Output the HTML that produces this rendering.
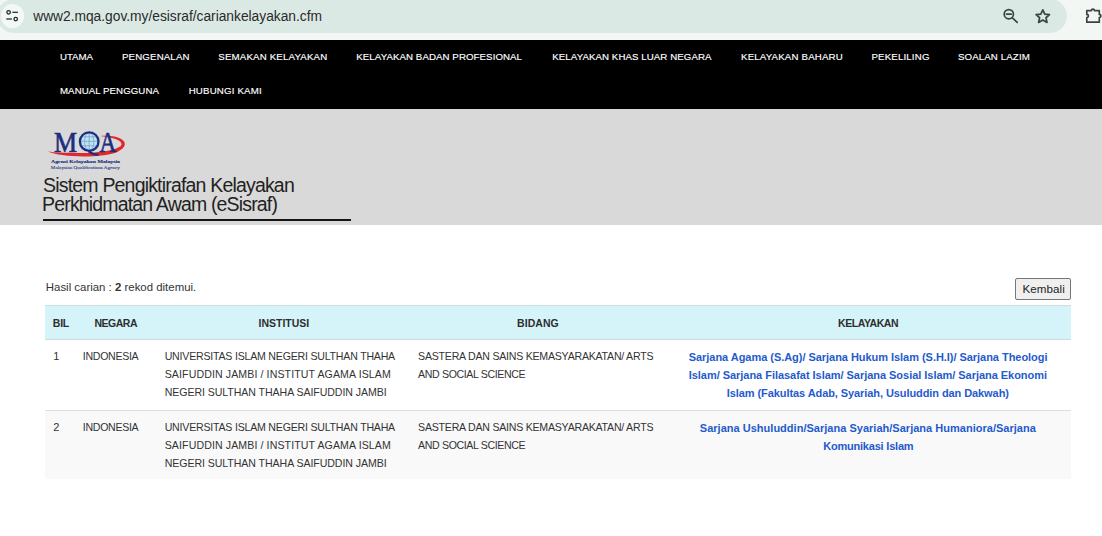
<!DOCTYPE html>
<html><head><meta charset="utf-8"><style>
html,body{margin:0;padding:0;width:1102px;height:536px;overflow:hidden;background:#fff;position:relative;font-family:"Liberation Sans",sans-serif}
.t{position:absolute;white-space:nowrap}
b{font-weight:bold}
</style></head><body>
<div style="position:absolute;left:0;top:0;width:1102px;height:40px;background:#f2f7f4"></div>
<div style="position:absolute;left:-3px;top:-1px;width:1070px;height:34px;border-radius:17px;background:#dbe9e4"></div>
<div style="position:absolute;left:1px;top:4px;width:23px;height:24px;border-radius:12px;background:#f3f8f6"></div>
<svg style="position:absolute;left:0;top:0" width="40" height="36" viewBox="0 0 40 36">
<g fill="none" stroke="#1f2a26" stroke-width="1.25">
<circle cx="8.6" cy="12.3" r="1.75"/><line x1="12.3" y1="12.3" x2="17.9" y2="12.3"/>
<circle cx="15.7" cy="19" r="1.75"/><line x1="6.3" y1="19" x2="11.9" y2="19"/>
</g></svg>
<svg style="position:absolute;left:995px;top:0;overflow:visible" width="107" height="36" viewBox="995 0 107 36">
<g fill="none" stroke="#3a4541" stroke-width="1.7" stroke-linecap="round" stroke-linejoin="round">
<circle cx="1008.8" cy="14.2" r="4.6"/><line x1="1006.5" y1="14.2" x2="1011.1" y2="14.2"/>
<line x1="1012.4" y1="17.8" x2="1017.2" y2="22.4"/>
<path d="M1042.80 9.82 L1044.78 14.22 L1049.51 14.66 L1045.99 17.74 L1046.98 22.47 L1042.80 20.05 L1038.62 22.47 L1039.61 17.74 L1036.09 14.66 L1040.82 14.22 Z"/>
<path d="M1086.8 10.6 H1091.4 A1.5 1.5 0 0 1 1094.4 10.6 H1099.3 V14.4 A1.6 1.6 0 0 1 1099.3 17.6 V22.2 H1086.8 V17.6 A1.6 1.6 0 0 0 1086.8 14.4 Z"/>
</g></svg>
<div style="position:absolute;left:0;top:40px;width:1102px;height:68.5px;background:#000"></div>
<div style="position:absolute;left:0;top:108.5px;width:1102px;height:116.5px;background:#d9d9d9"></div>
<svg style="position:absolute;left:40px;top:122px" width="95" height="52" viewBox="40 122 95 52">
<path d="M47.8 151.6 C60 157.4 100 158.4 116 152.4 C128.5 147.5 128 139 113 136.3 C108 135.6 103 135.6 100.5 136.1 C108 137 121.5 139.2 121.5 144.2 C121 149.5 100 153 80 153 C65 153 54 152.6 47.8 151.6 Z" fill="#e3262e"/>
<circle cx="89.2" cy="141.6" r="9" fill="#bde2f2"/>
<g stroke="#6b97c4" stroke-width="0.65" fill="none">
<line x1="80" y1="136.8" x2="98.5" y2="136.8"/><line x1="80" y1="141.3" x2="98.5" y2="141.3"/><line x1="80" y1="145.8" x2="98.5" y2="145.8"/>
<ellipse cx="89.2" cy="141.6" rx="4.6" ry="9"/><line x1="89.2" y1="132.3" x2="89.2" y2="150.3"/>
</g>
<circle cx="89.2" cy="141.6" r="9.3" fill="none" stroke="#1c2f7e" stroke-width="2.3"/>
<path d="M88.5 151.1 C91.5 153.6 94.5 154.8 98.5 154.6" stroke="#1c2f7e" stroke-width="2.1" fill="none"/>
<text transform="translate(54,152.3) scale(0.85,1)" font-family="Liberation Serif" font-size="30.5" fill="#1c2f7e" stroke="#1c2f7e" stroke-width="0.7">M</text>
<text transform="translate(99.6,152.3) scale(0.76,1)" font-family="Liberation Serif" font-size="30.5" fill="#1c2f7e" stroke="#1c2f7e" stroke-width="0.7">A</text>
<text x="51" y="163.3" font-family="Liberation Serif" font-weight="bold" font-size="5" fill="#22337f" stroke="#22337f" stroke-width="0.15" textLength="69" lengthAdjust="spacingAndGlyphs">Agensi Kelayakan Malaysia</text>
<text x="50.8" y="168.9" font-family="Liberation Serif" font-size="4.3" fill="#2e3f8c" stroke="#2e3f8c" stroke-width="0.1" textLength="69" lengthAdjust="spacingAndGlyphs">Malaysian Qualifications Agency</text>
</svg>
<div style="position:absolute;left:43px;top:218.6px;width:308px;height:2.2px;background:#151515"></div>
<div style="position:absolute;left:1015px;top:278px;width:54px;height:20px;border:1px solid #767676;border-radius:2px;background:#efefef"></div>
<div style="position:absolute;left:45px;top:305px;width:1026px;height:1px;background:#d3dcdf"></div>
<div style="position:absolute;left:45px;top:306px;width:1026px;height:33px;background:#d4f4f9"></div>
<div style="position:absolute;left:45px;top:339px;width:1026px;height:1px;background:#cfd8db"></div>
<div style="position:absolute;left:45px;top:410px;width:1026px;height:1px;background:#dedede"></div>
<div style="position:absolute;left:45px;top:411px;width:1026px;height:67.5px;background:#f9f9f9"></div>
<div class="t" style="left:33.20px;top:6.86px;font-size:13.8px;line-height:19.32px;color:#2a2a2a;font-weight:normal;letter-spacing:-0.019px;">www2.mqa.gov.my/esisraf/cariankelayakan.cfm</div>
<div class="t" style="left:59.90px;top:49.85px;font-size:9.7px;line-height:13.58px;color:#fff;font-weight:normal;letter-spacing:-0.006px;-webkit-text-stroke:0.15px #fff">UTAMA</div>
<div class="t" style="left:122.00px;top:49.85px;font-size:9.7px;line-height:13.58px;color:#fff;font-weight:normal;letter-spacing:0.142px;-webkit-text-stroke:0.15px #fff">PENGENALAN</div>
<div class="t" style="left:218.30px;top:49.85px;font-size:9.7px;line-height:13.58px;color:#fff;font-weight:normal;letter-spacing:0.166px;-webkit-text-stroke:0.15px #fff">SEMAKAN KELAYAKAN</div>
<div class="t" style="left:356.30px;top:49.85px;font-size:9.7px;line-height:13.58px;color:#fff;font-weight:normal;letter-spacing:0.071px;-webkit-text-stroke:0.15px #fff">KELAYAKAN BADAN PROFESIONAL</div>
<div class="t" style="left:552.30px;top:49.85px;font-size:9.7px;line-height:13.58px;color:#fff;font-weight:normal;letter-spacing:0.071px;-webkit-text-stroke:0.15px #fff">KELAYAKAN KHAS LUAR NEGARA</div>
<div class="t" style="left:741.00px;top:49.85px;font-size:9.7px;line-height:13.58px;color:#fff;font-weight:normal;letter-spacing:0.164px;-webkit-text-stroke:0.15px #fff">KELAYAKAN BAHARU</div>
<div class="t" style="left:871.40px;top:49.85px;font-size:9.7px;line-height:13.58px;color:#fff;font-weight:normal;letter-spacing:0.167px;-webkit-text-stroke:0.15px #fff">PEKELILING</div>
<div class="t" style="left:958.00px;top:49.85px;font-size:9.7px;line-height:13.58px;color:#fff;font-weight:normal;letter-spacing:0.113px;-webkit-text-stroke:0.15px #fff">SOALAN LAZIM</div>
<div class="t" style="left:60.00px;top:83.85px;font-size:9.7px;line-height:13.58px;color:#fff;font-weight:normal;letter-spacing:0.054px;-webkit-text-stroke:0.15px #fff">MANUAL PENGGUNA</div>
<div class="t" style="left:188.70px;top:83.85px;font-size:9.7px;line-height:13.58px;color:#fff;font-weight:normal;letter-spacing:0.177px;-webkit-text-stroke:0.15px #fff">HUBUNGI KAMI</div>
<div class="t" style="left:43.10px;top:171.99px;font-size:19.5px;line-height:27.3px;color:#222;font-weight:normal;letter-spacing:-0.816px;">Sistem Pengiktirafan Kelayakan</div>
<div class="t" style="left:42.10px;top:191.09px;font-size:19.5px;line-height:27.3px;color:#222;font-weight:normal;letter-spacing:-0.837px;">Perkhidmatan Awam (eSisraf)</div>
<div class="t" style="left:45.80px;top:279.67px;font-size:11.4px;line-height:15.96px;color:#333;font-weight:normal;letter-spacing:0.011px;">Hasil carian : <b>2</b> rekod ditemui.</div>
<div class="t" style="left:1022.40px;top:281.06px;font-size:11.6px;line-height:16.24px;color:#222;font-weight:normal;letter-spacing:0.098px;">Kembali</div>
<div class="t" style="left:52.80px;top:316.21px;font-size:10.5px;line-height:14.7px;color:#2e2e2e;font-weight:bold;letter-spacing:-0.250px;">BIL</div>
<div class="t" style="left:94.40px;top:316.21px;font-size:10.5px;line-height:14.7px;color:#2e2e2e;font-weight:bold;letter-spacing:-0.464px;">NEGARA</div>
<div class="t" style="left:258.60px;top:316.21px;font-size:10.5px;line-height:14.7px;color:#2e2e2e;font-weight:bold;letter-spacing:-0.017px;">INSTITUSI</div>
<div class="t" style="left:517.00px;top:316.21px;font-size:10.5px;line-height:14.7px;color:#2e2e2e;font-weight:bold;letter-spacing:0.070px;">BIDANG</div>
<div class="t" style="left:838.10px;top:316.21px;font-size:10.5px;line-height:14.7px;color:#2e2e2e;font-weight:bold;letter-spacing:-0.438px;">KELAYAKAN</div>
<div class="t" style="left:53.20px;top:349.29px;font-size:11px;line-height:15.4px;color:#333;font-weight:normal;letter-spacing:0.000px;">1</div>
<div class="t" style="left:82.80px;top:349.11px;font-size:10.6px;line-height:14.84px;color:#333;font-weight:normal;letter-spacing:-0.301px;">INDONESIA</div>
<div class="t" style="left:164.70px;top:349.11px;font-size:10.6px;line-height:14.84px;color:#333;font-weight:normal;letter-spacing:-0.214px;">UNIVERSITAS ISLAM NEGERI SULTHAN THAHA</div>
<div class="t" style="left:164.70px;top:367.11px;font-size:10.6px;line-height:14.84px;color:#333;font-weight:normal;letter-spacing:0.104px;">SAIFUDDIN JAMBI / INSTITUT AGAMA ISLAM</div>
<div class="t" style="left:164.70px;top:385.11px;font-size:10.6px;line-height:14.84px;color:#333;font-weight:normal;letter-spacing:-0.071px;">NEGERI SULTHAN THAHA SAIFUDDIN JAMBI</div>
<div class="t" style="left:418.10px;top:349.11px;font-size:10.6px;line-height:14.84px;color:#333;font-weight:normal;letter-spacing:-0.236px;">SASTERA DAN SAINS KEMASYARAKATAN/ ARTS</div>
<div class="t" style="left:418.10px;top:367.11px;font-size:10.6px;line-height:14.84px;color:#333;font-weight:normal;letter-spacing:-0.367px;">AND SOCIAL SCIENCE</div>
<div class="t" style="left:53.20px;top:420.49px;font-size:11px;line-height:15.4px;color:#333;font-weight:normal;letter-spacing:0.000px;">2</div>
<div class="t" style="left:82.80px;top:420.31px;font-size:10.6px;line-height:14.84px;color:#333;font-weight:normal;letter-spacing:-0.301px;">INDONESIA</div>
<div class="t" style="left:164.70px;top:420.31px;font-size:10.6px;line-height:14.84px;color:#333;font-weight:normal;letter-spacing:-0.214px;">UNIVERSITAS ISLAM NEGERI SULTHAN THAHA</div>
<div class="t" style="left:164.70px;top:438.31px;font-size:10.6px;line-height:14.84px;color:#333;font-weight:normal;letter-spacing:0.104px;">SAIFUDDIN JAMBI / INSTITUT AGAMA ISLAM</div>
<div class="t" style="left:164.70px;top:456.31px;font-size:10.6px;line-height:14.84px;color:#333;font-weight:normal;letter-spacing:-0.071px;">NEGERI SULTHAN THAHA SAIFUDDIN JAMBI</div>
<div class="t" style="left:418.10px;top:420.31px;font-size:10.6px;line-height:14.84px;color:#333;font-weight:normal;letter-spacing:-0.236px;">SASTERA DAN SAINS KEMASYARAKATAN/ ARTS</div>
<div class="t" style="left:418.10px;top:438.31px;font-size:10.6px;line-height:14.84px;color:#333;font-weight:normal;letter-spacing:-0.367px;">AND SOCIAL SCIENCE</div>
<div class="t" style="left:688.70px;top:349.79px;font-size:11px;line-height:15.4px;color:#1f5bcd;font-weight:bold;letter-spacing:-0.040px;">Sarjana Agama (S.Ag)/ Sarjana Hukum Islam (S.H.I)/ Sarjana Theologi</div>
<div class="t" style="left:688.70px;top:367.79px;font-size:11px;line-height:15.4px;color:#1f5bcd;font-weight:bold;letter-spacing:-0.035px;">Islam/ Sarjana Filasafat Islam/ Sarjana Sosial Islam/ Sarjana Ekonomi</div>
<div class="t" style="left:726.80px;top:385.79px;font-size:11px;line-height:15.4px;color:#1f5bcd;font-weight:bold;letter-spacing:-0.081px;">Islam (Fakultas Adab, Syariah, Usuluddin dan Dakwah)</div>
<div class="t" style="left:699.80px;top:420.99px;font-size:11px;line-height:15.4px;color:#1f5bcd;font-weight:bold;letter-spacing:0.017px;">Sarjana Ushuluddin/Sarjana Syariah/Sarjana Humaniora/Sarjana</div>
<div class="t" style="left:823.20px;top:438.99px;font-size:11px;line-height:15.4px;color:#1f5bcd;font-weight:bold;letter-spacing:-0.210px;">Komunikasi Islam</div>

</body></html>
